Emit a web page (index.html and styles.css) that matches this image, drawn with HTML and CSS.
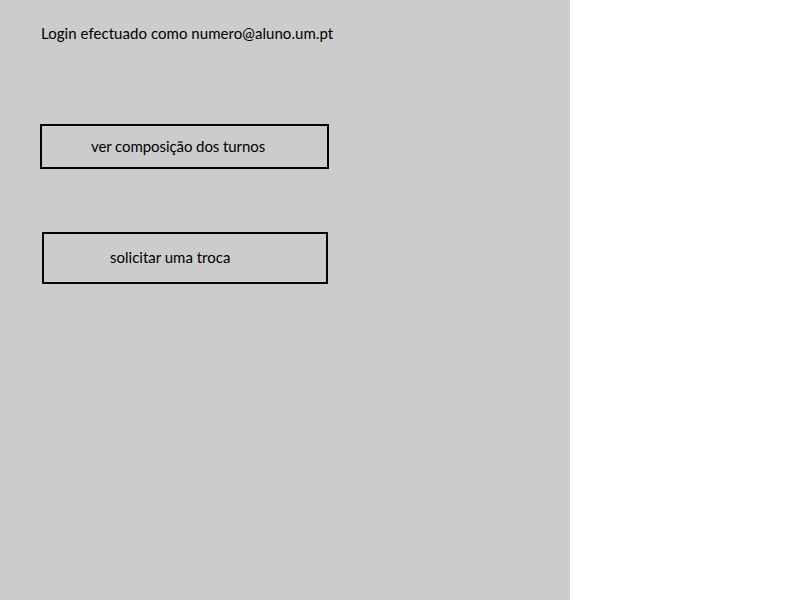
FILE: index.html
```html
<!DOCTYPE html>
<html>
<head>
<meta charset="utf-8">
<link rel="stylesheet" href="styles.css">
</head>
<body>
<div class="panel">
  <div class="login">Login efectuado como numero@aluno.um.pt</div>
  <div class="btn btn-turnos"><span>ver composição dos turnos</span></div>
  <div class="btn btn-troca"><span>solicitar uma troca</span></div>
</div>
</body>
</html>
```
FILE: styles.css
```css
html, body {
  margin: 0;
  padding: 0;
  background: #ffffff;
}
body {
  font-family: Lato, "Open Sans", sans-serif;
  font-size: 15px;
  color: #000;
}
.panel {
  width: 570px;
  height: 600px;
  background: #cccccc;
  display: flex;
  flex-direction: column;
  align-items: flex-start;
}
.login {
  margin: 24px 0 0 41px;
  line-height: 18px;
  letter-spacing: 0.05px;
}
.btn {
  box-sizing: border-box;
  border: 2px solid #000;
  display: flex;
  align-items: center;
  padding-bottom: 2px;
}
.btn-turnos {
  margin: 82px 0 0 40px;
  width: 289px;
  height: 45px;
  padding-left: 49px;
  letter-spacing: -0.08px;
}
.btn-troca {
  margin: 63px 0 0 42px;
  width: 286px;
  height: 52px;
  padding-left: 66px;
}
```
